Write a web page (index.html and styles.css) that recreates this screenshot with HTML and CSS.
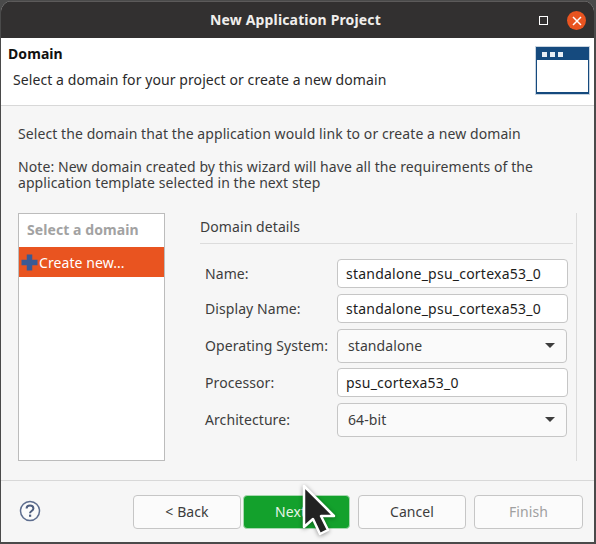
FILE: index.html
```html
<!DOCTYPE html>
<html lang="en">
<head>
    <meta charset="UTF-8">
    <title>New Application Project</title>
    <link rel="stylesheet" href="styles.css">
</head>
<body>
    <div class="window">
        <div class="titlebar">
            <span class="title">New Application Project</span>
            <span class="maximize"></span>
            <span class="close">
                <svg width="12" height="12" viewBox="0 0 12 12"><path d="M2 2l8 8M10 2l-8 8" stroke="#fff" stroke-width="1.5" fill="none"/></svg>
            </span>
        </div>

        <div class="header">
            <div class="header-text">
                <div class="header-title">Domain</div>
                <div class="header-desc">Select a domain for your project or create a new domain</div>
            </div>
            <svg class="header-icon" width="55" height="49" viewBox="0 0 55 49">
                <rect x="0" y="0" width="55" height="49" fill="#c8d4e0"/>
                <rect x="1" y="1" width="53" height="47" fill="#154a7e"/>
                <rect x="2" y="14" width="51" height="32" fill="#fff"/>
                <rect x="7" y="6" width="5" height="5" fill="#e8eef4"/>
                <rect x="15" y="6" width="5" height="5" fill="#e8eef4"/>
                <rect x="23" y="6" width="5" height="5" fill="#e8eef4"/>
            </svg>
        </div>

        <div class="content">
            <p class="intro">Select the domain that the application would link to or create a new domain</p>
            <p class="note">Note: New domain created by this wizard will have all the requirements of the application template selected in the next step</p>

            <div class="panes">
                <div class="domain-list">
                    <div class="list-head">Select a domain</div>
                    <div class="list-item">
                        <svg width="17" height="17" viewBox="0 0 17 17"><path d="M8.5 0.5v16M0.5 8.5h16" stroke="#3b5a94" stroke-width="5.5" fill="none"/></svg>
                        <span>Create new...</span>
                    </div>
                </div>

                <div class="details">
                    <div class="details-title">Domain details</div>
                    <div class="form">
                        <label>Name:</label>
                        <div class="field">standalone_psu_cortexa53_0</div>
                        <label>Display Name:</label>
                        <div class="field">standalone_psu_cortexa53_0</div>
                        <label>Operating System:</label>
                        <div class="combo"><span>standalone</span><i class="arrow"></i></div>
                        <label>Processor:</label>
                        <div class="field">psu_cortexa53_0</div>
                        <label>Architecture:</label>
                        <div class="combo"><span>64-bit</span><i class="arrow"></i></div>
                    </div>
                </div>
            </div>
        </div>

        <div class="footer">
            <svg class="help" width="22" height="22" viewBox="0 0 22 22">
                <circle cx="11" cy="11" r="9.5" fill="#fbfbfb" stroke="#5d6d8e" stroke-width="1.5"/>
                <path d="M7.6 8.6c0-2 1.5-3.1 3.4-3.1s3.4 1.1 3.4 2.9c0 2.6-3.4 2.5-3.4 4.9" fill="none" stroke="#4d5d7e" stroke-width="2"/>
                <rect x="10" y="14.6" width="2.2" height="2.2" fill="#4d5d7e"/>
            </svg>
            <div class="buttons">
                <button class="btn">&lt; Back</button>
                <button class="btn next">Next &gt;</button>
                <button class="btn cancel">Cancel</button>
                <button class="btn finish" disabled>Finish</button>
            </div>
        </div>
    </div>

    <svg class="cursor" width="38" height="54" viewBox="0 0 38 54">
        <path d="M4 3v41l9-8 7 15 8-4-7-14h13z" fill="#222" stroke="#fff" stroke-width="2.5" stroke-linejoin="round"/>
    </svg>
</body>
</html>
```

FILE: styles.css
```css
* {
    box-sizing: border-box;
    margin: 0;
    padding: 0;
}

html,
body {
    height: 544px;
    overflow: hidden;
}

body {
    position: relative;
    background: #4a4a4a;
    font-family: "Noto Sans", "Open Sans", sans-serif;
    font-size: 14px;
    letter-spacing: 0.08px;
    color: #3d3d3d;
}

.window {
    display: flex;
    flex-direction: column;
    width: 593px;
    height: 541px;
    margin: 1px 0 0 1px;
    background: #f6f6f6;
    border-radius: 11px 11px 0 0;
    overflow: hidden;
}

.titlebar {
    position: relative;
    display: flex;
    align-items: center;
    justify-content: center;
    flex: none;
    height: 37px;
    padding: 0 4px 1px 0;
    background: #323030;
    border-top: 1px solid #5c5a5a;
}

.title {
    font-size: 14px;
    font-weight: 700;
    letter-spacing: 0.15px;
    color: #f0eeec;
}

.maximize {
    position: absolute;
    top: 14px;
    left: 538px;
    width: 9px;
    height: 9px;
    border: 1px solid #fff;
}

.close {
    position: absolute;
    top: 9px;
    left: 566px;
    display: flex;
    align-items: center;
    justify-content: center;
    width: 19px;
    height: 19px;
    border-radius: 50%;
    background: #e95420;
}

.header {
    display: flex;
    justify-content: space-between;
    flex: none;
    height: 68px;
    padding: 6px 3px 0 7px;
    background: #fff;
    border-bottom: 1px solid #d8d8d8;
}

.header-title {
    font-size: 14px;
    line-height: 19px;
    font-weight: 700;
    color: #111;
}

.header-desc {
    margin: 7px 0 0 5px;
    line-height: 19px;
    color: #2a2a2a;
}

.header-icon {
    margin-top: 2px;
    margin-right: 1px;
}

.content {
    flex: 1;
    padding: 18px 17px 0;
}

.intro {
    line-height: 19px;
}

.note {
    width: 540px;
    margin-top: 16px;
    line-height: 16px;
}

.panes {
    display: flex;
    height: 248px;
    margin-top: 22px;
}

.domain-list {
    flex: none;
    width: 147px;
    background: #fff;
    border: 1px solid #bcbcbc;
}

.list-head {
    height: 33px;
    padding-left: 8px;
    font-weight: 700;
    line-height: 31px;
    color: #a2a2a2;
}

.list-item {
    display: flex;
    align-items: center;
    gap: 1px;
    height: 30px;
    padding-left: 2px;
    background: #e95420;
    color: #fff;
}

.details {
    flex: none;
    width: 377px;
    margin-left: 35px;
    padding-right: 3px;
    border-right: 1px solid #dcdcdc;
}

.details-title {
    height: 31px;
    border-bottom: 1px solid #dcdcdc;
    line-height: 28px;
}

.form {
    display: grid;
    grid-template-columns: 132px 231px;
    grid-template-rows: 29px 29px 33px 29px 33px;
    row-gap: 6px;
    align-items: center;
    margin-top: 15px;
    padding-left: 5px;
}

.form label {
    line-height: 19px;
}

.field,
.combo {
    display: flex;
    align-items: center;
    border: 1px solid #c6c6c6;
    border-radius: 4px;
}

.field {
    height: 29px;
    padding-left: 8px;
    background: #fff;
    letter-spacing: 0.23px;
    color: #1c1c1c;
}

.combo {
    justify-content: space-between;
    align-self: start;
    width: 230px;
    height: 34px;
    padding: 0 11px 2px 10px;
    background: #fafafa;
}

.arrow {
    width: 0;
    height: 0;
    border-top: 5px solid #3d3d3d;
    border-left: 5px solid transparent;
    border-right: 5px solid transparent;
}

.footer {
    display: flex;
    justify-content: space-between;
    flex: none;
    height: 62px;
    padding: 14px 11px 0 18px;
    border-top: 1px solid #d8d8d8;
}

.help {
    margin-top: 5px;
}

.buttons {
    display: flex;
}

.btn {
    width: 108px;
    height: 34px;
    padding-bottom: 2px;
    background: #fbfbfb;
    border: 1px solid #c6c6c6;
    border-radius: 4px;
    font-family: inherit;
    font-size: 14px;
    letter-spacing: inherit;
    color: #3d3d3d;
}

.next {
    width: 107px;
    margin-left: 2px;
    background: #13a12c;
    border: 1px solid #a8d8b0;
    color: #e8f5e8;
}

.cancel {
    margin-left: 8px;
}

.finish {
    width: 109px;
    margin-left: 8px;
}

.btn:disabled {
    color: #a0a0a0;
}

.cursor {
    position: absolute;
    top: 483px;
    left: 300px;
    filter: drop-shadow(0 1px 2px rgba(0, 0, 0, 0.4));
}
```
